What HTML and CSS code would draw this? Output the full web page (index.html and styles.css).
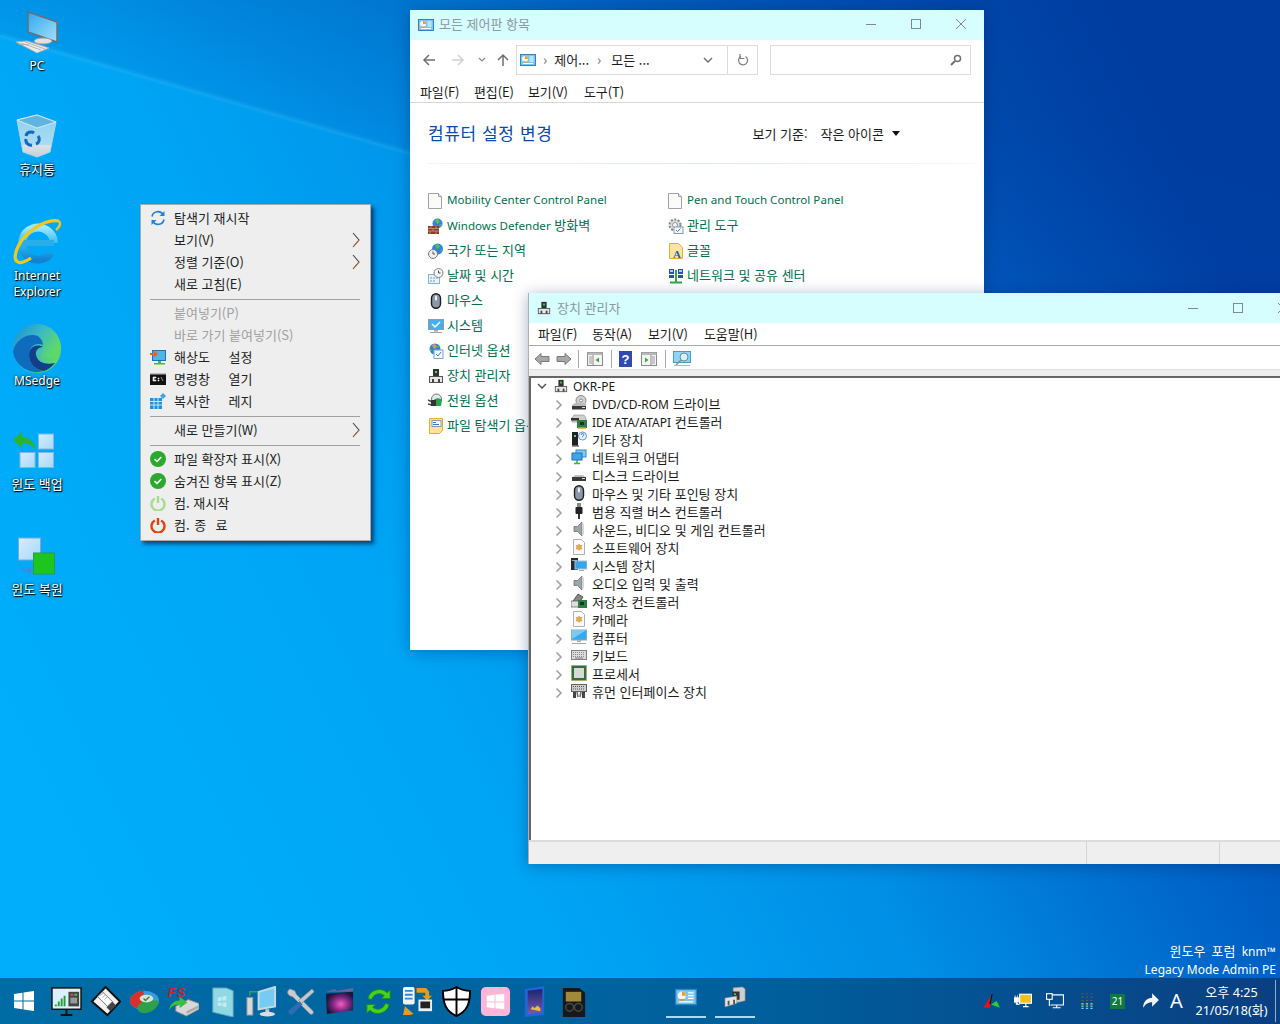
FILE: index.html
```html
<!DOCTYPE html>
<html lang="ko">
<head>
<meta charset="utf-8">
<title>Desktop</title>
<link rel="stylesheet" href="styles.css">
</head>
<body>
<div class="desktop">
<svg class="wallpaper" viewBox="0 0 1280 1024" preserveAspectRatio="none">
  <defs>
    <linearGradient id="wp" x1="0" y1="0.75" x2="1" y2="0.35">
      <stop offset="0" stop-color="#00aefb"/><stop offset=".3" stop-color="#00a6f6"/><stop offset=".55" stop-color="#008fe6"/><stop offset=".78" stop-color="#0062c6"/><stop offset="1" stop-color="#003fa6"/>
    </linearGradient>
    <linearGradient id="wpTop" gradientUnits="userSpaceOnUse" x1="200" y1="92.500" x2="257.500" y2="-107.500">
      <stop offset="0" stop-color="#003a9a" stop-opacity=".12"/><stop offset="1" stop-color="#003a9a" stop-opacity=".4"/>
    </linearGradient>
    <filter id="blurRay"><feGaussianBlur stdDeviation="1.5"/></filter>
    <linearGradient id="screen" x1="0" y1="0" x2="1" y2="1"><stop offset="0" stop-color="#2fa8ef"/><stop offset="1" stop-color="#a4e0fb"/></linearGradient>
    <linearGradient id="bin" x1="0" y1="0" x2="0" y2="1"><stop offset="0" stop-color="#8fd0f0"/><stop offset=".7" stop-color="#a8dcf2"/><stop offset=".72" stop-color="#d8e4ea"/><stop offset="1" stop-color="#c8cfd4"/></linearGradient>
    <linearGradient id="ieB" x1="0" y1="0" x2="0" y2="1"><stop offset="0" stop-color="#9ceafc"/><stop offset=".5" stop-color="#34b8ee"/><stop offset="1" stop-color="#0f84d4"/></linearGradient>
    <linearGradient id="edgeG" x1="0" y1="0" x2="1" y2=".5"><stop offset="0" stop-color="#1a8ccf"/><stop offset=".55" stop-color="#3ab9c8"/><stop offset="1" stop-color="#5fd86a"/></linearGradient>
    <linearGradient id="sq" x1="0" y1="0" x2="1" y2="1"><stop offset="0" stop-color="#d4ecfd"/><stop offset="1" stop-color="#a8d8fa"/></linearGradient>
    <radialGradient id="purp" cx=".55" cy=".55" r=".55"><stop offset="0" stop-color="#f060c0"/><stop offset=".5" stop-color="#8a2a8a"/><stop offset="1" stop-color="#1e1438"/></radialGradient>
    <linearGradient id="tablet" x1="0" y1="0" x2="0" y2="1"><stop offset="0" stop-color="#1a2470"/><stop offset="1" stop-color="#7a5ab0"/></linearGradient>

    <symbol id="cp" viewBox="0 0 16 16"><rect x=".5" y="2.500" width="15" height="11" fill="#79c8f1" stroke="#2f83bf"/><circle cx="5" cy="7" r="3" fill="#f5f8fb"/><path d="M5 7V4a3 3 0 0 1 3 3z" fill="#f0a020"/><path d="M2.500 9.500a3 3 0 0 0 5 0z" fill="#e8902a"/><path d="M9.500 5h4M9.500 7h4M9.500 9h4M3 11.500h10" stroke="#fff"/></symbol>
    <symbol id="dev" viewBox="0 0 16 16"><rect x="5" y="1" width="6" height="8" fill="#333"/><rect x="7" y="3" width="2" height="2" fill="#3ddc5a"/><rect x="1.500" y="8.500" width="13" height="6" fill="#e8e8e8" stroke="#555"/><rect x="4" y="11" width="2" height="3.500" fill="#444"/><rect x="10" y="11" width="2" height="3.500" fill="#444"/></symbol>
    <symbol id="doc" viewBox="0 0 16 16"><path d="M.5.5h10l3 3v12H.5z" fill="#fbfbfb" stroke="#a2a2a2"/><path d="M10.500.5v3h3" fill="#e8e8e8" stroke="#a2a2a2"/></symbol>
    <symbol id="fire" viewBox="0 0 16 16"><circle cx="9.500" cy="5.500" r="5" fill="#2f86d8"/><path d="M7 2l3-1 2 3-3 2zM11 7l3-1-1 3z" fill="#5cc04a"/><rect x="0" y="8" width="11" height="8" fill="#8f3a22"/><path d="M0 10.500h11M0 13h11M3 8v2.500M8 8v2.500M5 10.500V13M2 13v3M8 13v3" stroke="#d8a88a" stroke-width=".7"/></symbol>
    <symbol id="gear" viewBox="0 0 16 16"><circle cx="7" cy="7" r="5.500" fill="#d8dde0" stroke="#7d868c" stroke-width="2" stroke-dasharray="2 1.500"/><circle cx="7" cy="7" r="2.500" fill="#fff" stroke="#8a9299"/><rect x="6" y="9" width="9" height="6.500" fill="#f4f8fb" stroke="#8a9aa8"/><path d="M8 12l1.500 1.500 3-3" fill="none" stroke="#2c7fd0"/></symbol>
    <symbol id="font" viewBox="0 0 16 16"><path d="M1.500.5h9l4 4v11h-13z" fill="#fbe59a" stroke="#e0b030"/><text x="5" y="15" class="svg-a">A</text></symbol>
    <symbol id="nets" viewBox="0 0 16 16"><path d="M1 1h5v5H1zM10 1h5v5h-5zM1 7h5v3H1zM10 7h5v3h-5z" fill="#2a52a8"/><path d="M2 2h3v2H2zM11 2h3v2h-3z" fill="#9fd2f4"/><path d="M8 2v12M2 14.500h12" stroke="#2fa84a" stroke-width="2"/></symbol>
    <symbol id="region" viewBox="0 0 16 16"><circle cx="9.500" cy="6" r="5.500" fill="#2f86d8"/><path d="M7 2l3-1 2 3-3 2zM12 7l2-1-1 3z" fill="#58c048"/><circle cx="5" cy="11" r="4.500" fill="#f0f0f0" stroke="#777"/><path d="M5 8.500V11h2" fill="none" stroke="#555"/></symbol>
    <symbol id="date" viewBox="0 0 16 16"><rect x=".5" y="6.500" width="11" height="9" fill="#e8f2fa" stroke="#8ab0cc"/><path d="M2 9h2v2H2zM5 9h2v2H5zM8 9h2v2H8zM2 12h2v2H2zM5 12h2v2H5z" fill="#a8c8e0"/><circle cx="10.500" cy="5" r="4.500" fill="#f6f6f6" stroke="#808080"/><path d="M10.500 2.500V5h2" fill="none" stroke="#444"/></symbol>
    <symbol id="mouse" viewBox="0 0 16 16"><rect x="3.500" y=".7" width="9" height="14.600" rx="4.500" fill="#8c98a8" stroke="#1e1e1e" stroke-width="1.400"/><rect x="7" y="2.500" width="2" height="5" rx="1" fill="#f0f0f0"/></symbol>
    <symbol id="sys" viewBox="0 0 16 16"><rect x=".5" y="1.500" width="15" height="10" fill="#43aef0" stroke="#9a9a9a"/><path d="M4 6l3 3 5-5" fill="none" stroke="#fff" stroke-width="1.500"/><path d="M6 12h4v1.500H6zM2 14h12v1H2z" fill="#a4a4a4"/></symbol>
    <symbol id="inet" viewBox="0 0 16 16"><circle cx="7" cy="6" r="5.500" fill="#2f86d8"/><path d="M4 2l3-1 2 3-3 2zM1.500 6l2 1-1 2z" fill="#e0a030"/><path d="M8 3l3 0 0 2z" fill="#58c048"/><rect x="6" y="7" width="9" height="8.500" fill="#f4f9fd" stroke="#7fa4c4"/><path d="M8 11l2 2 3-4" fill="none" stroke="#2c7fd0"/></symbol>
    <symbol id="powr" viewBox="0 0 16 16"><circle cx="8.500" cy="6" r="5" fill="#dfe8ef" stroke="#777"/><path d="M5 8a5 4 0 0 1 9-1l-1 6H6z" fill="#2ea24a"/><path d="M0 7l4 2M0 11l4 1" stroke="#444" stroke-width="1.500"/><rect x="3" y="7" width="5" height="6" fill="#333"/></symbol>
    <symbol id="fopt" viewBox="0 0 16 16"><path d="M1.500.5h13v12l-3 3h-10z" fill="#fbe59a" stroke="#e0b030"/><rect x="4" y="2.500" width="9" height="6" fill="#fff" stroke="#8a9aa8"/><path d="M5 4.500h3M5 6.500h6" stroke="#2c7fd0"/></symbol>
    <symbol id="chev" viewBox="0 0 8 12"><path d="M1.500 1.500L6 6l-4.500 4.500" fill="none" stroke="#a2a2a2" stroke-width="1.600"/></symbol>
    <symbol id="mchev" viewBox="0 0 8 16"><path d="M1 1l6 7-6 7" fill="none" stroke="#444" stroke-width="1.100"/><path d="M1.500 14.500L7 8" fill="none" stroke="#d0601a" stroke-width="1"/></symbol>
    <symbol id="dvd" viewBox="0 0 16 16"><circle cx="10" cy="5.500" r="5" fill="#d0d0d0" stroke="#8a8a8a"/><circle cx="10" cy="5.500" r="1.500" fill="#fff" stroke="#888"/><path d="M1 10l3-2h11v6H1z" fill="#bbb"/><rect x="1" y="11" width="14" height="3.500" fill="#3a3a3a"/><rect x="11" y="12" width="3" height="1" fill="#ddd"/></symbol>
    <symbol id="ide" viewBox="0 0 16 16"><path d="M3 2h10l2 3v4H1V5z" fill="#cfcfcf" stroke="#888" stroke-width=".6"/><rect x="0" y="5" width="8" height="2.500" fill="#333"/><rect x="6" y="7" width="10" height="8" fill="#2e7e3e"/><path d="M7 15h8" stroke="#e0a020" stroke-width="1.500"/><path d="M9 9h4v3H9z" fill="#133"/></symbol>
    <symbol id="other" viewBox="0 0 16 16"><rect x="1" y="1" width="6" height="14" fill="#222"/><rect x="3" y="4" width="2" height="2" fill="#4dde6a"/><path d="M1 15h7" stroke="#777" stroke-width="1.500"/><circle cx="11.500" cy="5" r="4" fill="#eaf4fc" stroke="#5a9ad4"/><path d="M10.200 3.800a1.300 1.300 0 1 1 1.900 1.200l-.6.600v.6" fill="none" stroke="#2c6cc0"/></symbol>
    <symbol id="netad" viewBox="0 0 16 16"><rect x="5" y="1" width="10" height="7" fill="#7fc8f4" stroke="#3088c8"/><rect x="1" y="4" width="10" height="7" fill="#3fa6ec" stroke="#1d72b4"/><path d="M6 11v3M3 14.500h6" stroke="#3fb04a" stroke-width="1.500"/></symbol>
    <symbol id="disk" viewBox="0 0 16 16"><path d="M2 10l2-2h8l2 2z" fill="#c0c0c0"/><rect x="1" y="10" width="14" height="4" fill="#3a3a3a"/><rect x="11" y="11" width="3" height="1" fill="#ddd"/></symbol>
    <symbol id="usb" viewBox="0 0 16 16"><rect x="6" y="0" width="4" height="4" fill="#888"/><rect x="4.500" y="4" width="7" height="7" rx="1" fill="#222"/><rect x="7" y="11" width="2" height="5" fill="#333"/></symbol>
    <symbol id="sound" viewBox="0 0 16 16"><path d="M3 5.500h3.500L11 1v14l-4.500-4.500H3z" fill="#9ea6aa" stroke="#6a7276" stroke-width=".8"/><path d="M11 1v14l2-2V3z" fill="#d4d8da"/></symbol>
    <symbol id="softw" viewBox="0 0 16 16"><path d="M2.500.5h8l3 3v12h-11z" fill="#fafafa" stroke="#b0b0b0"/><path d="M8 5l1 1.500h2L10 8l1 2H9l-1 1.500L7 10H5l1-2-1-1.500h2z" fill="#e8a850" stroke="#d08828" stroke-width=".5"/></symbol>
    <symbol id="sysdev" viewBox="0 0 16 16"><rect x="0" y="1" width="7" height="12" fill="#2a2a2a"/><rect x="1" y="3" width="5" height="1" fill="#aaa"/><rect x="4" y="4" width="12" height="8" fill="#37a4ee" stroke="#9ac4dc"/><path d="M8 13h5v1H8z" fill="#aaa"/></symbol>
    <symbol id="stor" viewBox="0 0 16 16"><path d="M2 8l5-7 5 3-4 6z" fill="#888" stroke="#333" stroke-width=".7"/><rect x="0" y="8" width="8" height="6" fill="#dedede" stroke="#555" stroke-width=".7"/><rect x="7" y="7" width="9" height="8" fill="#2e7e3e"/><path d="M9 9h4v3H9z" fill="#133"/></symbol>
    <symbol id="comp" viewBox="0 0 16 16"><rect x=".5" y="1" width="15" height="10" fill="#36aaf0" stroke="#8fa8b8"/><path d="M.5 1h15L1 10z" fill="#79cbf6"/><path d="M6 11.500h4V13H6zM1 14h14v1H1z" fill="#a8a8a8"/></symbol>
    <symbol id="kbd" viewBox="0 0 16 16"><rect x=".5" y="3.500" width="15" height="9" fill="#dcdcdc" stroke="#808080"/><path d="M2 5.500h12M2 7.500h12M2 9.500h12" stroke="#8c8c8c" stroke-dasharray="1 1"/><path d="M4 11h8" stroke="#777"/></symbol>
    <symbol id="cpu" viewBox="0 0 16 16"><rect x=".5" y=".5" width="15" height="15" fill="#2e6e48" stroke="#c8a040" stroke-dasharray="1 .5"/><rect x="3" y="3" width="10" height="10" fill="#d8d8d8"/></symbol>
    <symbol id="hid" viewBox="0 0 16 16"><rect x=".5" y="1.500" width="15" height="7" fill="#cfcfcf" stroke="#606060"/><path d="M2 3.500h12M2 6h12" stroke="#555" stroke-dasharray="1 1"/><path d="M2 9h3v6H2zM11 9h3v6h-3z" fill="#444"/><path d="M6 9l1 5M10 9l-1 5" stroke="#666" stroke-width="1.500"/></symbol>
    <symbol id="okCircle" viewBox="0 0 16 16"><circle cx="8" cy="8" r="8" fill="#2ba82e"/><path d="M4.500 8.200l2.500 2.300 4.300-4.500" fill="none" stroke="#fff" stroke-width="1.600"/></symbol>
  </defs>
  <rect width="1280" height="1024" fill="url(#wp)"/>
  <polygon points="0,0 1280,0 1280,403 0,35" fill="url(#wpTop)"/>
  <line x1="0" y1="35" x2="1280" y2="403" stroke="#5fd0fb" stroke-opacity=".22" stroke-width="3" filter="url(#blurRay)"/>
</svg>

<nav class="desk-icons">
  <div class="desk-item">
    <svg class="desk-ico" viewBox="0 0 48 48"><polygon points="15,2 44,12 44,32 15,22" fill="url(#screen)" stroke="#6a6f74" stroke-width="1.500"/><ellipse cx="30" cy="31" rx="9" ry="3" fill="#e2e2e2" stroke="#a0a0a0"/><polygon points="3,32 14,31 36,38 24,43" fill="#ececec" stroke="#b0b0b0"/><path d="M8 33l20 7M12 32l20 7M5 34l11 1" stroke="#a8a8a8" stroke-width=".8"/></svg>
    <span class="desk-label"><span class="la">PC</span></span>
  </div>
  <div class="desk-item">
    <svg class="desk-ico" viewBox="0 0 48 48"><polygon points="4,5 24,0 43,7 37,37 24,42 10,37" fill="url(#bin)" stroke="#b6d4e4"/><polygon points="4,5 24,0 43,7 24,13" fill="#5fb4e0" stroke="#d0e8f4"/><path d="M13 21a5 5 0 0 1 8-3M25 21a5 5 0 0 1-2 8M13 24a5 5 0 0 0 6 6" fill="none" stroke="#1468c4" stroke-width="3"/></svg>
    <span class="desk-label">휴지통</span>
  </div>
  <div class="desk-item">
    <svg class="desk-ico" viewBox="0 0 48 48"><path d="M41 23A16 16 0 1 0 38 33" fill="none" stroke="url(#ieB)" stroke-width="8"/><path d="M9 23h32" stroke="#2aaeea" stroke-width="6"/><path d="M46 1C36-1 20 6 9 20 2 30 0 40 5 42c3 2 8-1 13-4" fill="none" stroke="#f2c71e" stroke-width="3.200"/><path d="M46 1c2 2 1 6-3 9" fill="none" stroke="#f2c71e" stroke-width="2.400"/></svg>
    <span class="desk-label"><span class="la">Internet<br>Explorer</span></span>
  </div>
  <div class="desk-item">
    <svg class="desk-ico" viewBox="0 0 48 48"><circle cx="24" cy="24" r="24" fill="url(#edgeG)"/><path d="M0 24a24 24 0 0 1 48-2c0 8-7 11-13 11-4 0-7-1-7-3 0-1 2-2 2-6 0-5-5-9-10-9-9 0-20 7-20 9z" fill="url(#edgeG)"/><path d="M0 27c2-11 11-17 20-17 6 0 10 5 10 10-6-3-14 0-14 10 0 8 6 15 15 16a24 24 0 0 1-31-19z" fill="#0f6cbc"/><path d="M30 22c-4-3-14-2-14 8 0 8 6 15 15 16 3-1 8-4 11-8-9 2-17 0-19-8-1-5 3-8 7-8z" fill="#123f8c"/></svg>
    <span class="desk-label"><span class="la">MSedge</span></span>
  </div>
  <div class="desk-item">
    <svg class="desk-ico" viewBox="0 0 48 48"><rect x="25.500" y="4" width="15" height="15" fill="url(#sq)" stroke="#7fb8e0"/><rect x="7" y="22.500" width="15" height="15" fill="url(#sq)" stroke="#7fb8e0"/><rect x="25.500" y="22.500" width="15" height="15" fill="url(#sq)" stroke="#7fb8e0"/><path d="M0 10L9 2v5c9 0 13 7 14 14-3-5-7-8-14-8v5z" fill="#2bb52b"/></svg>
    <span class="desk-label">윈도 백업</span>
  </div>
  <div class="desk-item">
    <svg class="desk-ico" viewBox="0 0 48 48"><rect x="5.500" y="3" width="22" height="22" fill="url(#sq)" stroke="#7fa8c8"/><rect x="20.500" y="18" width="21" height="21" fill="#1fc51f" stroke="#2a9a4a"/><path d="M6 27c1 6 5 7 9 7v-3l5 5-5 4v-3c-5 0-9-4-9-10z" fill="#3a8ce0"/></svg>
    <span class="desk-label">윈도 복원</span>
  </div>
</nav>

<section class="context-menu">
  <div class="m-row"><svg class="m-ico" viewBox="0 0 16 16"><path d="M2 6.500A6 6 0 0 1 13 4.500M14 9.500A6 6 0 0 1 3 11.500" fill="none" stroke="#1d83e0" stroke-width="1.600"/><path d="M14.500 1v5h-5zM1.500 15v-5h5z" fill="#1d83e0"/></svg><span>탐색기 재시작</span></div>
  <div class="m-row"><span class="m-ico"></span><span>보기(V)</span><svg class="m-chev"><use href="#mchev"/></svg></div>
  <div class="m-row"><span class="m-ico"></span><span>정렬 기준(O)</span><svg class="m-chev"><use href="#mchev"/></svg></div>
  <div class="m-row"><span class="m-ico"></span><span>새로 고침(E)</span></div>
  <div class="m-sep"></div>
  <div class="m-row off"><span class="m-ico"></span><span>붙여넣기(P)</span></div>
  <div class="m-row off"><span class="m-ico"></span><span>바로 가기 붙여넣기(S)</span></div>
  <div class="m-row"><svg class="m-ico" viewBox="0 0 16 16"><rect x="2.500" y="1.500" width="13" height="10" fill="#4fb4ec" stroke="#1d72b4"/><path d="M0 4h4V1.500L8 5 4 8.500V6H0z" fill="#f0601a"/><path d="M8 12h3v2H8zM4 14h11v1.500H4z" fill="#44b84a"/></svg><span class="wide">해상도 설정</span></div>
  <div class="m-row"><svg class="m-ico" viewBox="0 0 16 16"><rect y="2" width="16" height="12" fill="#111"/><rect y="2" width="16" height="1.500" fill="#bbb"/><path d="M3 6h3v1H4v2h2v1H3zM8 7h1v1H8zM8 9h1v1H8zM11 6l2 4" stroke="#eee" stroke-width=".6" fill="#eee"/></svg><span class="wide">명령창 열기</span></div>
  <div class="m-row"><svg class="m-ico" viewBox="0 0 16 16"><path d="M0 5h12v11H0z" fill="#2292d8"/><path d="M4 5v11M8 5v11M0 8.500h12M0 12h12" stroke="#c4e6fa"/><path d="M13 0l3 3-3 3-3-3z" fill="#3ea4e8"/></svg><span class="wide">복사한 레지</span></div>
  <div class="m-sep"></div>
  <div class="m-row"><span class="m-ico"></span><span>새로 만들기(W)</span><svg class="m-chev"><use href="#mchev"/></svg></div>
  <div class="m-sep"></div>
  <div class="m-row"><svg class="m-ico"><use href="#okCircle"/></svg><span>파일 확장자 표시(X)</span></div>
  <div class="m-row"><svg class="m-ico"><use href="#okCircle"/></svg><span>숨겨진 항목 표시(Z)</span></div>
  <div class="m-row"><svg class="m-ico" viewBox="0 0 16 16"><path d="M4.800 3.500a6.500 6.500 0 1 0 6.400 0" fill="none" stroke="#a6dc90" stroke-width="2.400"/><path d="M8 1v7" stroke="#a6dc90" stroke-width="2.400"/></svg><span>컴. 재시작</span></div>
  <div class="m-row"><svg class="m-ico" viewBox="0 0 16 16"><path d="M4.800 3.500a6.500 6.500 0 1 0 6.400 0" fill="none" stroke="#e2420e" stroke-width="2.400"/><path d="M8 1v7" stroke="#e2420e" stroke-width="2.400"/></svg><span class="keep">컴. 종  료</span></div>
</section>

<section class="window cp-window">
  <header class="titlebar cp-title">
    <svg class="i16"><use href="#cp"/></svg><span class="title-text">모든 제어판 항목</span>
    <div class="win-btns">
      <svg class="win-btn" viewBox="0 0 12 12"><path d="M1 6.500h10" stroke="#808a8c"/></svg>
      <svg class="win-btn" viewBox="0 0 12 12"><rect x="1.500" y="1.500" width="9" height="9" fill="none" stroke="#808a8c"/></svg>
      <svg class="win-btn" viewBox="0 0 12 12"><path d="M1 1l10 10M11 1L1 11" stroke="#808a8c"/></svg>
    </div>
  </header>
  <div class="navbar">
    <svg class="nav-a" viewBox="0 0 14 14"><path d="M13 7H2M7 2L2 7l5 5" fill="none" stroke="#707070" stroke-width="1.500"/></svg>
    <svg class="nav-b" viewBox="0 0 14 14"><path d="M1 7h11M7 2l5 5-5 5" fill="none" stroke="#d0d0d0" stroke-width="1.500"/></svg>
    <svg class="nav-c" viewBox="0 0 8 6"><path d="M1 1l3 3 3-3" fill="none" stroke="#8a8a8a" stroke-width="1.200"/></svg>
    <svg class="nav-d" viewBox="0 0 14 14"><path d="M7 13V2M2 7l5-5 5 5" fill="none" stroke="#707070" stroke-width="1.500"/></svg>
    <div class="address">
      <svg class="i16"><use href="#cp"/></svg>
      <span class="crumb-sep">›</span><span class="crumb">제어...</span><span class="crumb-sep">›</span><span class="crumb">모든 ...</span>
      <svg class="addr-drop" viewBox="0 0 10 6"><path d="M1 1l4 4 4-4" fill="none" stroke="#707070" stroke-width="1.400"/></svg>
      <div class="addr-refresh"><svg class="i12" viewBox="0 0 12 12"><path d="M8.500 2.500A4.500 4.500 0 1 1 4 2.300" fill="none" stroke="#808080" stroke-width="1.300"/><path d="M3 0v4.500h4.500" fill="none" stroke="#808080" stroke-width="1.200"/></svg></div>
    </div>
    <div class="search"><svg class="i12" viewBox="0 0 12 12"><circle cx="7.500" cy="4.500" r="3" fill="none" stroke="#707070" stroke-width="1.500"/><path d="M5 7l-4 4" stroke="#707070" stroke-width="2"/></svg></div>
  </div>
  <div class="menubar cp-menu"><span>파일(F)</span><span>편집(E)</span><span>보기(V)</span><span>도구(T)</span></div>
  <div class="cp-head">
    <h1 class="cp-h1">컴퓨터 설정 변경</h1>
    <div class="viewby"><span>보기 기준:</span><span>작은 아이콘</span><span class="caret"></span></div>
  </div>
  <div class="cp-rule"></div>
  <ul class="cp-grid">
    <li><svg class="i16"><use href="#doc"/></svg><span class="la">Mobility Center Control Panel</span></li>
    <li><svg class="i16"><use href="#doc"/></svg><span class="la">Pen and Touch Control Panel</span></li>
    <li><svg class="i16"><use href="#fire"/></svg><span><span class="la">Windows Defender</span> 방화벽</span></li>
    <li><svg class="i16"><use href="#gear"/></svg><span>관리 도구</span></li>
    <li><svg class="i16"><use href="#region"/></svg><span>국가 또는 지역</span></li>
    <li><svg class="i16"><use href="#font"/></svg><span>글꼴</span></li>
    <li><svg class="i16"><use href="#date"/></svg><span>날짜 및 시간</span></li>
    <li><svg class="i16"><use href="#nets"/></svg><span>네트워크 및 공유 센터</span></li>
    <li><svg class="i16"><use href="#mouse"/></svg><span>마우스</span></li>
    <li><svg class="i16"><use href="#gear"/></svg></li>
    <li><svg class="i16"><use href="#sys"/></svg><span>시스템</span></li>
    <li></li>
    <li><svg class="i16"><use href="#inet"/></svg><span>인터넷 옵션</span></li>
    <li></li>
    <li><svg class="i16"><use href="#dev"/></svg><span>장치 관리자</span></li>
    <li></li>
    <li><svg class="i16"><use href="#powr"/></svg><span>전원 옵션</span></li>
    <li></li>
    <li><svg class="i16"><use href="#fopt"/></svg><span>파일 탐색기 옵션</span></li>
  </ul>
</section>

<section class="window dm-window">
  <header class="titlebar dm-title">
    <svg class="i14"><use href="#dev"/></svg><span class="title-text">장치 관리자</span>
    <div class="win-btns">
      <svg class="win-btn" viewBox="0 0 12 12"><path d="M1 6.500h10" stroke="#808a8c"/></svg>
      <svg class="win-btn" viewBox="0 0 12 12"><rect x="1.500" y="1.500" width="9" height="9" fill="none" stroke="#808a8c"/></svg>
      <svg class="win-btn" viewBox="0 0 12 12"><path d="M1 1l10 10M11 1L1 11" stroke="#808a8c"/></svg>
    </div>
  </header>
  <div class="menubar dm-menu"><span>파일(F)</span><span>동작(A)</span><span>보기(V)</span><span>도움말(H)</span></div>
  <div class="toolbar">
    <svg class="tb-arrow" viewBox="0 0 16 14"><path d="M7 1.500L1 7l6 5.500V9.500h8v-5H7z" fill="#a8a8a8" stroke="#7a7a7a"/></svg>
    <svg class="tb-arrow" viewBox="0 0 16 14"><path d="M9 1.500L15 7l-6 5.500V9.500H1v-5h8z" fill="#a8a8a8" stroke="#7a7a7a"/></svg>
    <span class="tb-sep"></span>
    <svg class="tb-ico" viewBox="0 0 16 14"><rect x=".5" y=".5" width="15" height="13" fill="#f4f4f4" stroke="#8a8a8a"/><rect x=".5" y=".5" width="15" height="2.500" fill="#b8b8b8"/><path d="M6 3v11" stroke="#8a8a8a"/><path d="M12 5.500v5L8.500 8z" fill="#2fb04a"/><path d="M2 5h3M2 7h3M2 9h3M2 11h3" stroke="#9a9a9a"/></svg>
    <span class="tb-sep"></span>
    <svg class="tb-help" viewBox="0 0 13 16"><rect width="13" height="16" fill="#2f4ab0"/><text x="6.500" y="13" class="svg-q">?</text></svg>
    <svg class="tb-ico" viewBox="0 0 16 14"><rect x=".5" y=".5" width="15" height="13" fill="#f4f4f4" stroke="#8a8a8a"/><rect x=".5" y=".5" width="15" height="2.500" fill="#b8b8b8"/><path d="M10 3v11" stroke="#8a8a8a"/><path d="M4 5.500v5L7.500 8z" fill="#2fb04a"/><path d="M11 5h3M11 7h3M11 9h3M11 11h3" stroke="#9a9a9a"/></svg>
    <span class="tb-sep"></span>
    <svg class="tb-mon" viewBox="0 0 18 16"><rect x=".5" y=".5" width="17" height="11" fill="#8fd4f6" stroke="#4a9ac8"/><circle cx="11" cy="6" r="4" fill="#d8f0fb" stroke="#6a8a9a"/><path d="M8 9l-5 5" stroke="#8a8a8a" stroke-width="1.500"/><path d="M1 14.500h16" stroke="#b8b8b8"/></svg>
  </div>
  <div class="dm-strip"></div>
  <div class="tree">
    <div class="root-row"><svg class="root-chev" viewBox="0 0 10 6"><path d="M1 1l4 4 4-4" fill="none" stroke="#555" stroke-width="1.500"/></svg><svg class="i14"><use href="#dev"/></svg><span class="la">OKR-PE</span></div>
    <ul class="tree-list">
      <li><svg class="t-chev"><use href="#chev"/></svg><svg class="i16"><use href="#dvd"/></svg><span><span class="la">DVD/CD-ROM</span> 드라이브</span></li>
      <li><svg class="t-chev"><use href="#chev"/></svg><svg class="i16"><use href="#ide"/></svg><span><span class="la">IDE ATA/ATAPI</span> 컨트롤러</span></li>
      <li><svg class="t-chev"><use href="#chev"/></svg><svg class="i16"><use href="#other"/></svg><span>기타 장치</span></li>
      <li><svg class="t-chev"><use href="#chev"/></svg><svg class="i16"><use href="#netad"/></svg><span>네트워크 어댑터</span></li>
      <li><svg class="t-chev"><use href="#chev"/></svg><svg class="i16"><use href="#disk"/></svg><span>디스크 드라이브</span></li>
      <li><svg class="t-chev"><use href="#chev"/></svg><svg class="i16"><use href="#mouse"/></svg><span>마우스 및 기타 포인팅 장치</span></li>
      <li><svg class="t-chev"><use href="#chev"/></svg><svg class="i16"><use href="#usb"/></svg><span>범용 직렬 버스 컨트롤러</span></li>
      <li><svg class="t-chev"><use href="#chev"/></svg><svg class="i16"><use href="#sound"/></svg><span>사운드, 비디오 및 게임 컨트롤러</span></li>
      <li><svg class="t-chev"><use href="#chev"/></svg><svg class="i16"><use href="#softw"/></svg><span>소프트웨어 장치</span></li>
      <li><svg class="t-chev"><use href="#chev"/></svg><svg class="i16"><use href="#sysdev"/></svg><span>시스템 장치</span></li>
      <li><svg class="t-chev"><use href="#chev"/></svg><svg class="i16"><use href="#sound"/></svg><span>오디오 입력 및 출력</span></li>
      <li><svg class="t-chev"><use href="#chev"/></svg><svg class="i16"><use href="#stor"/></svg><span>저장소 컨트롤러</span></li>
      <li><svg class="t-chev"><use href="#chev"/></svg><svg class="i16"><use href="#softw"/></svg><span>카메라</span></li>
      <li><svg class="t-chev"><use href="#chev"/></svg><svg class="i16"><use href="#comp"/></svg><span>컴퓨터</span></li>
      <li><svg class="t-chev"><use href="#chev"/></svg><svg class="i16"><use href="#kbd"/></svg><span>키보드</span></li>
      <li><svg class="t-chev"><use href="#chev"/></svg><svg class="i16"><use href="#cpu"/></svg><span>프로세서</span></li>
      <li><svg class="t-chev"><use href="#chev"/></svg><svg class="i16"><use href="#hid"/></svg><span>휴먼 인터페이스 장치</span></li>
    </ul>
  </div>
  <footer class="statusbar"><div class="st-a"></div><div class="st-b"></div><div class="st-c"></div></footer>
</section>

<aside class="watermark"><div class="wm-top">윈도우 포럼 <span class="la">knm™</span></div><div class="la">Legacy Mode Admin PE</div></aside>

<footer class="taskbar">
  <div class="start"><svg class="start-ico" viewBox="0 0 20 20"><path d="M0 3l8.500-1.200V9.500H0zM9.500 1.600L20 0v9.500H9.500zM0 10.500h8.500v7.700L0 17zM9.500 10.500H20V20L9.500 18.400z" fill="#fff"/></svg></div>
  <div class="tb-app"><svg class="app" viewBox="0 0 32 32"><rect x="1" y="2" width="30" height="22" fill="#d8f0ff" stroke="#111" stroke-width="1.500"/><path d="M4 19h2v2H4zM7 16h2v5H7zM10 13h2v8h-2zM13 10h2v11h-2z" fill="#2a9a3a"/><rect x="18" y="6" width="11" height="15" fill="#444"/><rect x="20" y="8" width="3" height="2" fill="#e84a3a"/><rect x="24" y="8" width="3" height="2" fill="#4ac04a"/><path d="M20 12h7v6h-7z" fill="#999"/><path d="M15 24h2v5h-2zM10 29h12v2H10z" fill="#111"/></svg></div>
  <div class="tb-app"><svg class="app" viewBox="0 0 32 32"><path d="M16 1l15 15-13 14L2 16z" fill="#f2f2f2" stroke="#111" stroke-width="2"/><path d="M17 22l6-6 4 4-6 6z" fill="#444"/><path d="M8 11l5-5 10 10-5 5z" fill="#fff" stroke="#777"/><path d="M11 10l3-3M13 12l3-3M15 14l3-3" stroke="#aaa"/></svg></div>
  <div class="tb-app"><svg class="app" viewBox="0 0 32 32"><ellipse cx="16" cy="15" rx="15" ry="10" fill="#3a9ae0"/><path d="M1 15a15 10 0 0 1 14-10v10l-6 8C4 22 1 19 1 15z" fill="#d8302a"/><path d="M9 20l7-5 15 0c0 6-7 13-15 13-3 0-5-1-7-3z" fill="#2fa04a"/><ellipse cx="18" cy="13" rx="7" ry="4" fill="#d8e4d8"/><path d="M15 13l2 2 4-4" fill="none" stroke="#2a8a3a" stroke-width="1.500"/></svg></div>
  <div class="tb-app"><svg class="app" viewBox="0 0 32 32"><text x="0" y="11" class="svg-fs">FS</text><path d="M8 21l13-7 11 4v6l-13 7-11-5z" fill="#d8d8d8" stroke="#888"/><path d="M19 26l12-6v3l-12 6z" fill="#aaa"/><path d="M1 25c1-7 7-11 11-10v-4l8 6-8 6v-4c-4 0-8 1-11 6z" fill="#3ac03a"/></svg></div>
  <div class="tb-app"><svg class="app" viewBox="0 0 32 32"><path d="M6 2l14 0 7 3v27l-21-5z" fill="#8fd8e4" stroke="#5aa4b8"/><path d="M11 12l4-1v4l-4 1zM16 11l4-1v5l-4 0zM11 17l4 0v4l-4-1zM16 17l4 0v5l-4-1z" fill="#c4ecf0"/></svg></div>
  <div class="tb-app"><svg class="app" viewBox="0 0 32 32"><path d="M13 6l17-5v20l-17 3z" fill="#74ccf4" stroke="#c8d8e0" stroke-width="2"/><path d="M20 24h4v3h-4z" fill="#ccc"/><ellipse cx="22" cy="29" rx="8" ry="2.500" fill="#ddd"/><rect x="1" y="12" width="6" height="18" fill="#d8d8d8" stroke="#999"/><path d="M4 10V6h8" fill="none" stroke="#3aa05a" stroke-width="1.500"/></svg></div>
  <div class="tb-app"><svg class="app" viewBox="0 0 32 32"><path d="M5 3c-3 2-3 5 0 7 2 1 3 1 4 2l17 17c2 1 4-1 3-3L12 9c-1-1-1-3-2-4z" fill="#c8ccd0" stroke="#8a9096" stroke-width=".8"/><path d="M28 3l2 3-13 12-3-3z" fill="#c4c8cc" stroke="#8a9096" stroke-width=".8"/><path d="M15 16l3 3-10 10c-2 2-6-2-4-4z" fill="#2f6cb4"/></svg></div>
  <div class="tb-app"><svg class="app" viewBox="0 0 32 32"><path d="M2 6l9-3 2 2 17-3v4H2z" fill="#6a64a0"/><path d="M2 8l28-2v19L3 29z" fill="url(#purp)"/></svg></div>
  <div class="tb-app"><svg class="app" viewBox="0 0 32 32"><path d="M5 13A12 12 0 0 1 25 7l3-3v9h-9l3-3a8 8 0 0 0-13 4z" fill="#46d21e" stroke="#1e8a1e"/><path d="M27 19A12 12 0 0 1 7 25l-3 3v-9h9l-3 3a8 8 0 0 0 13-4z" fill="#46d21e" stroke="#1e8a1e"/></svg></div>
  <div class="tb-app"><svg class="app" viewBox="0 0 32 32"><rect x="1" y="1" width="12" height="18" rx="2" fill="#f4f4f4"/><path d="M3 5h8M3 9h8M3 13h8" stroke="#2f8ad0" stroke-width="2"/><path d="M15 2h10l3 4v4h3l-5 5-5-5h3V7h-9z" fill="#e89a20"/><rect x="17" y="14" width="14" height="12" fill="#eee"/><rect x="19" y="16" width="10" height="7" fill="#222"/><path d="M3 21l9 8-4 1H1z" fill="#e89a20"/></svg></div>
  <div class="tb-app"><svg class="app" viewBox="0 0 32 32"><path d="M16 1c5 3 9 4 14 4 0 13-3 21-14 26C5 26 2 18 2 5c5 0 9-1 14-4z" fill="#fff" stroke="#000" stroke-width="2"/><path d="M16 1v30M2 14h28" stroke="#000" stroke-width="2"/></svg></div>
  <div class="tb-app"><svg class="app" viewBox="0 0 32 32"><rect x="1" y="1" width="30" height="30" rx="5" fill="#ffb6d6"/><path d="M7 10l8-1v7H7zM16 9l9-1v8h-9zM7 17h8v6l-8-1zM16 17h9v7l-9-1z" fill="#fff"/></svg></div>
  <div class="tb-app"><svg class="app" viewBox="0 0 32 32"><path d="M6 3l20-3v30l-20 2z" fill="#2464d8"/><path d="M9 5l15-2v24L9 29z" fill="url(#tablet)"/><path d="M12 24l2-3 2 2 3-3 3 3v3z" fill="#e8c040"/></svg></div>
  <div class="tb-app"><svg class="app" viewBox="0 0 32 32"><path d="M5 2h17l6 5v25H5z" fill="#16181a"/><rect x="8" y="6" width="16" height="10" fill="#a08a3a"/><circle cx="12" cy="22" r="4" fill="none" stroke="#484848" stroke-width="1.500"/><circle cx="21" cy="22" r="4" fill="none" stroke="#484848" stroke-width="1.500"/></svg></div>
  <div class="running">
    <div class="run-item"><svg class="run-ico"><use href="#cp"/></svg></div>
    <div class="run-item"><svg class="run-ico" viewBox="0 0 24 24"><path d="M10 2l10-1 3 2v13l-13 3z" fill="#cfcfcf" stroke="#888" stroke-width=".6"/><rect x="9" y="6" width="8" height="9" fill="#333"/><rect x="11" y="8" width="2" height="2" fill="#3ddc5a"/><path d="M1 13l13-2v8L1 23z" fill="#e4e4e4" stroke="#777" stroke-width=".6"/><path d="M4 16h2v5H4zM10 15h2v5h-2z" fill="#555"/></svg></div>
  </div>
  <div class="tray">
    <svg class="tray-ico" viewBox="0 0 16 16"><path d="M9 2L1 14h6z" fill="#e8101a"/><path d="M8 11l8 3-3-6z" fill="#22d03a"/><path d="M9 2l-2 9" stroke="#111"/></svg>
    <svg class="tray-ico" viewBox="0 0 16 16"><rect x="5" y="2" width="10.500" height="8" fill="#f0c020" stroke="#fff"/><path d="M8 13h5M10.500 10v3" stroke="#fff"/><path d="M0 5h4v4H0zM1 3v2M3 3v2M2 9v2h3" stroke="#fff" fill="#fff" stroke-width=".7"/></svg>
    <svg class="tray-ico" viewBox="0 0 16 16"><path d="M4 2.500h11.500v9H4M9.500 11.500v2M6 14h7" fill="none" stroke="#fff"/><rect x=".5" y="1.500" width="5" height="5" fill="#0a3f80" stroke="#fff"/><path d="M3 6.500v6" stroke="#fff"/></svg>
    <svg class="tray-ico" viewBox="0 0 16 16"><path d="M3 1h2v1H3zM7 1h2v1H7zM11 1h2v1h-2zM3 4h2v1H3zM7 4h2v1H7zM11 4h2v1h-2zM3 7h2v1H3zM7 7h2v1H7zM11 7h2v1h-2z" fill="#5a5a5a"/><path d="M3 10h2v1H3zM7 10h2v1H7zM11 10h2v1h-2z" fill="#f0d050"/><path d="M3 12h2v1H3zM7 12h2v1H7zM11 12h2v1h-2z" fill="#60e0a0"/><path d="M3 14h2v1H3zM7 14h2v1H7zM11 14h2v1h-2z" fill="#60d8f8"/></svg>
    <span class="tray-21 la">21</span>
    <svg class="tray-ico" viewBox="0 0 16 16"><path d="M1 14C1 8 5 5 9 5V1l6 6-6 6V9c-4 0-6 2-8 5z" fill="#f0f6fa"/></svg>
    <span class="tray-a">A</span>
    <div class="clock"><div>오후 <span class="la big">4:25</span></div><div><span class="la big">21/05/18(</span>화<span class="la big">)</span></div></div>
    <span class="show-desktop"></span>
  </div>
</footer>
</div>
</body>
</html>
```

FILE: styles.css
```css
* { box-sizing: border-box; }
html, body { margin: 0; padding: 0; }
body { font-family: "Noto Sans CJK KR", "Noto Sans", sans-serif; font-size: 13px; color: #1c1c1c; }
ul { list-style: none; margin: 0; padding: 0; }
svg { display: block; flex: none; }
.desktop { position: relative; width: 1280px; height: 1024px; overflow: hidden; }
.wallpaper { position: absolute; inset: 0; width: 1280px; height: 1024px; }
.la { font-family: "Noto Sans", "Noto Sans CJK KR", sans-serif; font-size: 12px; }
.svg-a { font: 700 11px "Liberation Serif", serif; fill: #1a62c0; }
.svg-q { font: 700 13px "Liberation Sans", sans-serif; fill: #fff; text-anchor: middle; }
.svg-fs { font: italic 700 13px "Liberation Sans", sans-serif; fill: #d8202a; letter-spacing: 1px; }

.i12 { width: 12px; height: 12px; }
.i14 { width: 14px; height: 14px; }
.i16 { width: 16px; height: 16px; }

/* desktop icons */
.desk-icons { position: absolute; left: 0; top: 10px; width: 74px; display: grid; grid-auto-rows: 105px; }
.desk-item { display: flex; flex-direction: column; align-items: center; color: #fff; }
.desk-ico { width: 48px; height: 48px; overflow: visible; }
.desk-label { margin-top: -2px; line-height: 16px; text-align: center; color: #fff; text-shadow: 1px 1px 1px #000, 0 0 3px rgba(0,0,0,.8); }
.desk-label .la { font-size: 12px; display: block; margin-top: 2px; }

/* context menu */
.context-menu { position: absolute; left: 140px; top: 204px; width: 231px; height: 337px; background: #eee; border: 1px solid #a8a8a8; padding: 2px 0 4px; box-shadow: 3px 3px 4px rgba(0,20,60,.65); color: #222; }
.m-row { display: flex; align-items: center; height: 22px; padding: 0 10px 0 9px; }
.m-row > span:not(.m-ico) { margin-top: -2px; }
.m-row.off { color: #a0a0a0; }
.m-ico { width: 16px; height: 16px; margin-right: 8px; flex: none; }
.m-chev { width: 8px; height: 16px; margin-left: auto; }
.m-sep { height: 7px; margin: 0 10px 0 9px; background: linear-gradient(#a0a0a0, #a0a0a0) 0 4px / 100% 1px no-repeat; }
.wide { word-spacing: 15px; }
.keep { white-space: pre; word-spacing: 1px; }

/* windows */
.window { position: absolute; background: #fff; display: flex; flex-direction: column; box-shadow: 0 2px 14px rgba(0,30,80,.35); }
.cp-window { left: 410px; top: 10px; width: 574px; height: 640px; }
.dm-window { left: 528px; top: 293px; width: 800px; height: 571px; border-left: 1px solid #b0b0b0; }
.titlebar { display: flex; align-items: center; background: #d6fdff; flex: none; }
.cp-title { height: 30px; padding-left: 8px; }
.dm-title { height: 30px; padding-left: 8px; }
.title-text { margin-left: 6px; color: #8b9a9c; }
.cp-title .title-text { margin-left: 5px; margin-top: -4px; }
.dm-title .title-text { margin-top: -2px; }
.win-btns { margin-left: auto; display: flex; align-items: center; gap: 33px; }
.cp-title .win-btns { padding-right: 17px; padding-bottom: 2px; }
.dm-title .win-btns { padding-right: 39px; }
.win-btn { width: 12px; height: 12px; }

.navbar { display: flex; align-items: flex-start; height: 40px; padding-top: 5px; flex: none; position: relative; }
.nav-a { width: 14px; height: 14px; margin: 8px 0 0 12px; }
.nav-b { width: 14px; height: 14px; margin: 8px 0 0 15px; }
.nav-c { width: 8px; height: 6px; margin: 12px 0 0 13px; }
.nav-d { width: 14px; height: 14px; margin: 8px 0 0 10px; }
.address { display: flex; align-items: center; width: 242px; height: 30px; margin-left: 6px; border: 1px solid #dcdcdc; padding-left: 3px; position: relative; }
.crumb-sep { color: #666; margin: -2px 7px 0 7px; font-size: 14px; line-height: 1; }
.crumb { min-width: 33px; margin-top: -2px; }
.crumb + .crumb-sep { margin-left: 8px; margin-right: 10px; }
.addr-drop { width: 10px; height: 6px; margin-left: auto; margin-right: 44px; }
.addr-refresh { position: absolute; right: 0; top: 0; bottom: 0; width: 30px; border-left: 1px solid #dcdcdc; display: flex; align-items: center; justify-content: center; }
.search { width: 201px; height: 30px; margin-left: 12px; border: 1px solid #dcdcdc; display: flex; align-items: center; justify-content: flex-end; padding-right: 8px; }

.menubar { display: flex; flex: none; align-items: center; letter-spacing: -.1px; }
.cp-menu { height: 23px; padding-left: 10px; gap: 16px; padding-top: 1px; border-bottom: 1px solid #d8d8d8; }
.cp-menu span { width: 38px; white-space: nowrap; }
.cp-menu span:nth-child(3) { width: 40px; }
.dm-menu { height: 23px; padding-left: 9px; padding-bottom: 2px; border-bottom: 1px solid #a8a8a8; }
.dm-menu span { width: 56px; white-space: nowrap; }
.dm-menu span:first-child { width: 54px; }

.cp-head { display: flex; align-items: center; height: 60px; padding: 0 84px 0 18px; flex: none; }
.cp-h1 { font-size: 17px; font-weight: 400; margin: -2px 0 0; color: #0a4aa8; letter-spacing: .6px; }
.viewby { margin-left: auto; display: flex; align-items: center; gap: 13px; }
.caret { width: 0; height: 0; border: 4px solid transparent; border-top: 5px solid #111; border-bottom: 0; margin-left: -5px; }
.cp-rule { height: 1px; margin: 0 9px 0 18px; background: linear-gradient(90deg, #f2f5f8, #dfe7ee 50%, #f6f8fa); flex: none; }
.cp-grid { display: grid; grid-template-columns: 240px 240px; grid-auto-rows: 25px; padding: 24px 0 0 18px; color: #00704e; }
.cp-grid li { display: flex; align-items: center; gap: 3px; white-space: nowrap; }
.cp-grid li > span { margin-top: -2px; }
.cp-grid .la { font-size: 11.6px; }

.toolbar { display: flex; align-items: center; height: 23px; padding: 2px 0 0 5px; flex: none; }
.tb-arrow { width: 16px; height: 14px; margin-right: 6px; }
.tb-sep { width: 1px; height: 18px; background: #a8a8a8; margin: 0 8px 0 0; }
.tb-ico { width: 16px; height: 14px; margin-right: 8px; }
.tb-help { width: 13px; height: 16px; margin: 0 9px 0 -1px; }
.tb-mon { width: 18px; height: 16px; margin-left: -1px; }
.dm-strip { height: 9px; flex: none; background: #eeeeee; border-top: 1px solid #e0e0e0; border-bottom: 2px solid #666; }
.tree { flex: 1; border-left: 2px solid #666; min-height: 0; }
.root-row { display: flex; align-items: center; height: 16px; padding-left: 6px; }
.root-chev { width: 10px; height: 6px; margin-right: 7px; }
.root-row .la { margin-left: 5px; }
.tree-list li { display: flex; align-items: center; height: 18px; padding-left: 24px; white-space: nowrap; }
.t-chev { width: 8px; height: 12px; margin: 4px 8px 0 0; }
.tree-list .i16 { margin-right: 5px; }
.statusbar { display: flex; height: 24px; flex: none; background: #efefef; border-top: 2px solid #dcdcdc; }
.st-a { width: 558px; border-right: 1px solid #d4d4d4; }
.st-b { width: 133px; border-right: 1px solid #d4d4d4; }

.watermark { position: absolute; right: 4px; top: 942px; text-align: right; color: #fff; line-height: 18px; }
.watermark > .la { display: block; }
.wm-top { word-spacing: 2.5px; }

/* taskbar */
.taskbar { position: absolute; left: 0; bottom: 0; width: 1280px; height: 46px; display: flex; align-items: center; background: linear-gradient(90deg, #006ca6, #005f9c 60%, #0a3f82); color: #fff; }
.start { width: 47px; display: flex; justify-content: center; }
.start-ico { width: 20px; height: 20px; }
.tb-app { width: 39px; display: flex; justify-content: center; }
.app { width: 31px; height: 31px; }
.running { display: flex; gap: 9px; margin-left: 73px; align-self: stretch; }
.run-item { width: 40px; height: 40px; border-bottom: 2px solid #a8dcf5; display: flex; align-items: center; justify-content: center; }
.run-ico { width: 22px; height: 22px; }
.tray { margin-left: auto; display: flex; align-items: center; height: 46px; }
.tray-ico { width: 18px; height: 18px; margin-right: 14px; }
.tray-21 { width: 15px; height: 15px; background: #0f7a3c; color: #fff; font-size: 10px; line-height: 15px; text-align: center; margin-right: 17px; }
.tray-a { font: 20px/1 "Noto Sans", sans-serif; margin-left: -4px; width: 20px; }
.clock { width: 79px; margin: -1px 0 0 2px; text-align: center; line-height: 17px; font-size: 13px; }
.clock .big { font-size: 12.6px; }
.show-desktop { width: 1px; height: 42px; background: #8fb0cc; margin: 0 4px 0 4px; }
```
